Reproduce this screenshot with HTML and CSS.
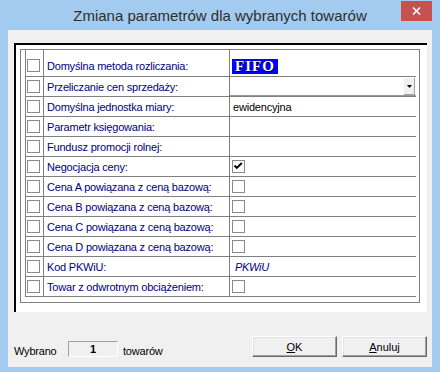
FILE: index.html
```html
<!DOCTYPE html>
<html>
<head>
<meta charset="utf-8">
<link rel="stylesheet" href="styles.css">
</head>
<body>
<div class="window">
  <div class="titlebar">
    <span class="title">Zmiana parametrów dla wybranych towarów</span>
    <div class="close"><svg width="9" height="8" viewBox="0 0 9 8"><path d="M1 0.5L8 7.5M8 0.5L1 7.5" stroke="#fff" stroke-width="1.6"/></svg></div>
  </div>
  <div class="client">
    <div class="panel">
      <div class="frame">
        <div class="grid">
          <div class="row first"><div class="c chk"><span class="box"></span></div><div class="c label">Domyślna metoda rozliczania:</div><div class="c val"><span class="fifo">FIFO</span></div></div>
          <div class="row"><div class="c chk"><span class="box"></span></div><div class="c label">Przeliczanie cen sprzedaży:</div><div class="c val combo-cell"><div class="combo"><span class="drop"><svg width="5" height="3" viewBox="0 0 5 3"><path d="M0 0H5L2.5 3Z" fill="#000"/></svg></span></div></div></div>
          <div class="row"><div class="c chk"><span class="box"></span></div><div class="c label">Domyślna jednostka miary:</div><div class="c val text">ewidencyjna</div></div>
          <div class="row"><div class="c chk"><span class="box"></span></div><div class="c label">Parametr księgowania:</div><div class="c val"></div></div>
          <div class="row"><div class="c chk"><span class="box"></span></div><div class="c label">Fundusz promocji rolnej:</div><div class="c val"></div></div>
          <div class="row"><div class="c chk"><span class="box"></span></div><div class="c label">Negocjacja ceny:</div><div class="c val"><span class="box"><svg width="11" height="11" viewBox="0 0 11 11"><path d="M1.5 4.5L3.8 7L8.8 2" fill="none" stroke="#000" stroke-width="1.9"/></svg></span></div></div>
          <div class="row"><div class="c chk"><span class="box"></span></div><div class="c label">Cena A powiązana z ceną bazową:</div><div class="c val"><span class="box"></span></div></div>
          <div class="row"><div class="c chk"><span class="box"></span></div><div class="c label">Cena B powiązana z ceną bazową:</div><div class="c val"><span class="box"></span></div></div>
          <div class="row"><div class="c chk"><span class="box"></span></div><div class="c label">Cena C powiązana z ceną bazową:</div><div class="c val"><span class="box"></span></div></div>
          <div class="row"><div class="c chk"><span class="box"></span></div><div class="c label">Cena D powiązana z ceną bazową:</div><div class="c val"><span class="box"></span></div></div>
          <div class="row"><div class="c chk"><span class="box"></span></div><div class="c label">Kod PKWiU:</div><div class="c val italic">PKWiU</div></div>
          <div class="row"><div class="c chk"><span class="box"></span></div><div class="c label">Towar z odwrotnym obciążeniem:</div><div class="c val"><span class="box"></span></div></div>
        </div>
      </div>
    </div>
    <div class="bar">
      <span class="txt lbl1">Wybrano</span>
      <span class="count">1</span>
      <span class="txt lbl2">towarów</span>
      <div class="buttons">
        <div class="btn"><u>O</u>K</div>
        <div class="btn"><u>A</u>nuluj</div>
      </div>
    </div>
  </div>
</div>
</body>
</html>
```

FILE: styles.css
```css
* { box-sizing: border-box; }
html, body { margin: 0; padding: 0; }
body {
  width: 440px;
  height: 372px;
  overflow: hidden;
  background: #a2cbef;
  font-family: "Liberation Sans", Arial, sans-serif;
  font-size: 11px;
}
.window {
  width: 440px;
  height: 372px;
  display: flex;
  flex-direction: column;
  background: #a2cbef;
}
.titlebar {
  position: relative;
  height: 30px;
  padding-top: 1px;
  line-height: 29px;
  text-align: center;
  font-size: 15px;
  color: #2e2e2e;
}
.close {
  position: absolute;
  top: 1px;
  right: 8px;
  width: 31px;
  height: 20px;
  background: #c75050;
  display: flex;
  align-items: center;
  justify-content: center;
}
.close svg { display: block; }
.client {
  margin: 0 8px;
  height: 337px;
  background: #f0f0f0;
  display: flex;
  flex-direction: column;
  padding: 13px 5px 10px 6px;
}
.panel {
  width: 413px;
  height: 269px;
  background: #fff;
  border-top: 2px solid #000;
  border-left: 2px solid #000;
  padding: 4px 0 0 4px;
}
.frame {
  width: 400px;
  height: 254px;
  border: 1px solid #808080;
  padding-left: 4px;
}
.grid { width: 391px; }
.row {
  display: grid;
  grid-template-columns: 18px 186px 187px;
  height: 20px;
  border-bottom: 1px solid #808080;
}
.row.first { height: 27px; }
.row.first .c { padding-top: 5px; }
.c {
  border-left: 1px solid #808080;
  display: flex;
  align-items: center;
  white-space: nowrap;
  overflow: hidden;
}
.chk { padding-left: 1px; }
.box {
  display: block;
  width: 13px;
  height: 13px;
  border: 1px solid #8a8a8a;
  background: #fff;
}
.box svg { display: block; }
.label {
  padding-left: 3px;
  color: #000080;
  letter-spacing: -0.2px;
}
.val { padding-left: 2px; }
.val.text { padding-left: 3px; color: #000; letter-spacing: -0.2px; }
.val.italic { padding-left: 5px; font-style: italic; color: #000080; letter-spacing: -0.3px; }
.fifo {
  display: block;
  width: 46px;
  height: 15px;
  margin-top: 1px;
  background: #0000ff;
  color: #fff;
  font-family: "Liberation Serif", "Times New Roman", serif;
  font-weight: bold;
  font-size: 15px;
  line-height: 15px;
  letter-spacing: 1px;
  text-align: center;
  text-shadow: 1px 1px 0 #000;
}
.combo-cell { padding-left: 0; align-items: stretch; }
.combo {
  flex: 1;
  display: flex;
  justify-content: flex-end;
  border-bottom: 1px solid #9a9a9a;
  padding-right: 1px;
}
.drop {
  width: 12px;
  height: 18px;
  background: #f0f0f0;
  box-shadow: inset 1px 1px #fff, inset -1px -1px #a0a0a0;
  display: flex;
  align-items: center;
  justify-content: center;
  padding-top: 1px;
}
.drop svg { display: block; }
.bar {
  margin-top: auto;
  display: flex;
  align-items: flex-end;
  height: 21px;
}
.txt {
  line-height: 12px;
  color: #000;
  letter-spacing: -0.2px;
}
.lbl1 { width: 54px; }
.lbl2 { margin-left: 5px; }
.count {
  width: 50px;
  height: 16px;
  border-top: 1px solid #a0a0a0;
  border-left: 1px solid #a0a0a0;
  border-bottom: 1px solid #fff;
  border-right: 1px solid #fff;
  background: #f0f0f0;
  text-align: center;
  font-weight: bold;
  line-height: 14px;
}
.buttons {
  margin-left: auto;
  display: flex;
  gap: 5px;
}
.btn {
  width: 85px;
  height: 21px;
  background: #f0f0f0;
  border-top: 1px solid #fff;
  border-left: 1px solid #fff;
  border-right: 1px solid #696969;
  border-bottom: 1px solid #696969;
  box-shadow: inset -1px -1px #a0a0a0, inset 1px 1px #e3e3e3;
  text-align: center;
  line-height: 17px;
  padding-top: 2px;
  color: #000;
}
```
